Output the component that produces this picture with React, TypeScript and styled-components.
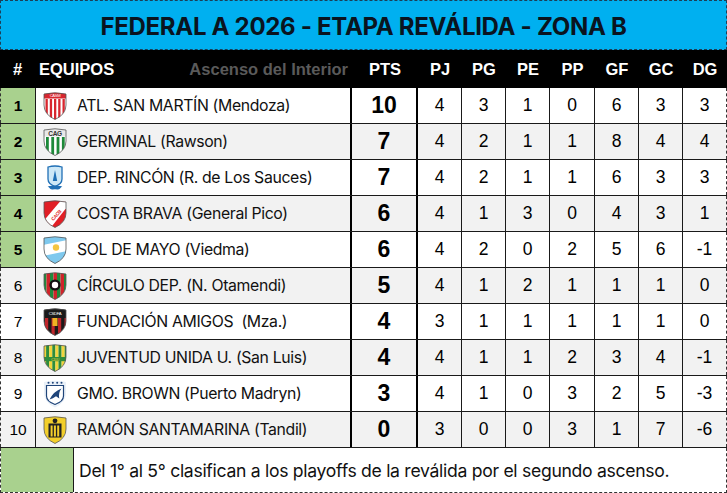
import React from 'react'
import styled, { createGlobalStyle } from 'styled-components'

const GlobalStyle = createGlobalStyle`
  html, body {
    margin: 0;
    padding: 0;
    background: #ffffff;
  }
`

const COLS = '35px 317px 66px 44px 44px 44px 45px 44px 44px 44px'
const NUM_FONT = '"Liberation Sans", Arial, sans-serif'
const TEAM_FONT = 'Inter, "Noto Sans", sans-serif'

const Sheet = styled.div`
  width: 727px;
  height: 493px;
  display: flex;
  flex-direction: column;
  overflow: hidden;
`

const Title = styled.div`
  height: 50px;
  background: #00b0f0;
  display: flex;
  align-items: center;
  justify-content: center;
  font-family: ${TEAM_FONT};
  font-weight: 700;
  font-size: 24px;
  color: #0a1420;
  letter-spacing: -0.3px;
  border: 1px dashed #1c3f57;
  box-sizing: border-box;
  padding-top: 2px;
`

const HeaderRow = styled.div`
  height: 38px;
  display: grid;
  grid-template-columns: ${COLS};
  background: #000000;
  color: #ffffff;
  font-family: ${NUM_FONT};
  font-weight: 700;
  font-size: 16.5px;
`

const HeadCell = styled.div<{ $align?: 'left' | 'center' }>`
  display: flex;
  align-items: center;
  justify-content: ${p => (p.$align === 'left' ? 'space-between' : 'center')};
  padding: ${p => (p.$align === 'left' ? '0 4px 0 4px' : '0')};
`

const Muted = styled.span`
  color: #5a5a5a;
`

const Row = styled.div<{ $shade: boolean }>`
  height: 36px;
  display: grid;
  grid-template-columns: ${COLS};
  background: ${p => (p.$shade ? '#f2f2f2' : '#ffffff')};
  border-bottom: 1px solid #1a1a1a;
  box-sizing: border-box;
`

const PosCell = styled.div<{ $qualified: boolean }>`
  display: flex;
  align-items: center;
  justify-content: center;
  background: ${p => (p.$qualified ? '#a9d18e' : 'transparent')};
  font-family: ${NUM_FONT};
  font-weight: ${p => (p.$qualified ? 700 : 400)};
  font-size: 15.5px;
  color: #000;
  border-left: 1px dashed #333;
`

const TeamCell = styled.div`
  display: flex;
  align-items: center;
  gap: 10px;
  padding-left: 7px;
  border-left: 1px solid #1a1a1a;
  border-right: 2px solid #000;
  font-family: ${TEAM_FONT};
  font-size: 15.8px;
  color: #111;
  letter-spacing: -0.35px;
  white-space: pre;
`

const NumCell = styled.div<{ $big?: boolean; $last?: boolean }>`
  display: flex;
  align-items: center;
  justify-content: center;
  font-family: ${NUM_FONT};
  font-size: ${p => (p.$big ? '23px' : '17.5px')};
  font-weight: ${p => (p.$big ? 700 : 400)};
  color: #000;
  border-right: ${p => (p.$big ? '2px solid #000' : p.$last ? '1px dashed #333' : '1px solid #1a1a1a')};
`

const Footer = styled.div`
  flex: 1;
  display: flex;
  border: 1px dashed #333;
  border-top: none;
  box-sizing: border-box;
`

const FooterSwatch = styled.div`
  width: 72px;
  background: #a9d18e;
  border-right: 1px solid #1a1a1a;
`

const FooterText = styled.div`
  display: flex;
  align-items: center;
  padding-left: 5px;
  font-family: ${TEAM_FONT};
  font-size: 17.6px;
  color: #111;
  letter-spacing: -0.3px;
  white-space: nowrap;
`

const SHIELD = 'M1 2 Q12 -0.5 23 2 L23 13 Q23 22.5 12 27.5 Q1 22.5 1 13 Z'

function Crest({ id }: { id: number }) {
  const clip = `crest-${id}`
  let body: React.ReactNode = null
  switch (id) {
    case 1:
      body = (
        <>
          <rect x="0" y="0" width="24" height="28" fill="#fff" />
          {[3.5, 7.8, 12, 16.2, 20.5].map(x => (
            <rect key={x} x={x - 1} y="7" width="2.3" height="22" fill="#d8262e" />
          ))}
          <rect x="0" y="0" width="24" height="6.5" fill="#d8262e" />
          <text x="12" y="5.3" fontSize="4.2" fill="#fff" textAnchor="middle" fontFamily="Liberation Sans">CASM</text>
        </>
      )
      break
    case 2:
      body = (
        <>
          <rect x="0" y="0" width="24" height="28" fill="#fff" />
          {[3, 8.3, 13.6, 18.9].map(x => (
            <rect key={x} x={x} y="9" width="2.8" height="20" fill="#1d8a3a" />
          ))}
          <rect x="0" y="0" width="24" height="8.5" fill="#e8e8e8" />
          <text x="12" y="7.5" fontSize="6.5" fontWeight="700" fill="#333" textAnchor="middle" fontFamily="Liberation Sans">CAG</text>
        </>
      )
      break
    case 3:
      body = (
        <>
          <rect x="0" y="0" width="24" height="28" fill="#ffffff" />
          <path d="M5 3 Q12 1 19 3 L19 15 Q19 20 12 22.5 Q5 20 5 15 Z" fill="#cde8f7" stroke="#1f6fb5" strokeWidth="1.3" />
          <path d="M12 6 L14.2 17 L9.8 17 Z" fill="#1f6fb5" />
          <path d="M1 23.5 Q12 19.5 23 23.5 L22 27 Q12 23.5 2 27 Z" fill="#1f6fb5" />
        </>
      )
      break
    case 4:
      body = (
        <>
          <rect x="0" y="0" width="24" height="28" fill="#e11f26" />
          <path d="M-2 24 L20 -2 L28 2 L6 30 Z" fill="#fff" />
          <text x="13" y="17" fontSize="4.8" fontWeight="700" fill="#e11f26" textAnchor="middle" fontFamily="Liberation Sans" transform="rotate(-48 13 15)">CACB</text>
        </>
      )
      break
    case 5:
      body = (
        <>
          <rect x="0" y="0" width="24" height="28" fill="#7fc9ee" />
          <path d="M0 9 L24 4 L24 15 L0 20 Z" fill="#fff" />
          <circle cx="13" cy="11.5" r="3.2" fill="#f4c542" />
        </>
      )
      break
    case 6:
      body = (
        <>
          {[0, 1, 2, 3, 4, 5, 6].map(i => (
            <rect key={i} x={i * 3.5} y="0" width="3.5" height="28" fill={i % 2 === 0 ? '#1f8a3c' : '#d0232a'} />
          ))}
          <circle cx="12" cy="13" r="5.6" fill="#111" />
          <circle cx="12" cy="13" r="3.2" fill="#fff" />
        </>
      )
      break
    case 7:
      body = (
        <>
          <rect x="0" y="0" width="24" height="28" fill="#1a1a1a" />
          {[2, 8.5, 15, 21.5].map(x => (
            <rect key={x} x={x} y="10" width="3.2" height="20" fill="#c0262b" />
          ))}
          <rect x="0" y="0" width="24" height="8.5" fill="#1a1a1a" />
          <text x="12" y="6.5" fontSize="4.3" fill="#fff" textAnchor="middle" fontFamily="Liberation Sans">CSDFA</text>
          <rect x="9.5" y="10" width="5" height="8" fill="#f0b323" />
        </>
      )
      break
    case 8:
      body = (
        <>
          {[0, 1, 2, 3, 4, 5, 6, 7].map(i => (
            <rect key={i} x={i * 3.1} y="0" width="3.1" height="28" fill={i % 2 === 0 ? '#f2d53c' : '#2f8d3a'} />
          ))}
          <rect x="0" y="13" width="24" height="4.2" fill="#2f8d3a" />
          <text x="12" y="16.5" fontSize="3.4" fill="#f2d53c" textAnchor="middle" fontFamily="Liberation Sans">CJUU</text>
        </>
      )
      break
    case 9:
      body = (
        <>
          <rect x="0" y="0" width="24" height="28" fill="#e9f0f8" />
          <path d="M3.5 5.5 L20.5 5.5 L20.5 16 Q20.5 21.5 12 24.5 Q3.5 21.5 3.5 16 Z" fill="#fff" stroke="#20457a" strokeWidth="1.2" />
          <path d="M6.5 19.5 Q11 11 18.5 8.5 Q15 13 16.3 18.5 L13 16.3 Q10 18.5 6.5 19.5 Z" fill="#20457a" />
          {[5.5, 9.8, 14.2, 18.5].map(x => (
            <circle key={x} cx={x} cy="2.7" r="1" fill="#20457a" />
          ))}
        </>
      )
      break
    case 10:
      body = (
        <>
          <rect x="0" y="0" width="24" height="28" fill="#f3cf2b" />
          <rect x="5.5" y="7.5" width="13" height="14" fill="#222" />
          {[7.6, 10.9, 14.2].map(x => (
            <rect key={x} x={x} y="9.5" width="2" height="11" fill="#f3cf2b" />
          ))}
          <circle cx="12" cy="4.8" r="2.4" fill="#222" />
        </>
      )
      break
  }
  const outline = id === 3 || id === 9 ? 'none' : '#555'
  return (
    <svg width="24" height="28" viewBox="0 0 24 28">
      <defs>
        <clipPath id={clip}>
          <path d={SHIELD} />
        </clipPath>
      </defs>
      <g clipPath={`url(#${clip})`}>{body}</g>
      <path d={SHIELD} fill="none" stroke={outline} strokeWidth="0.8" />
    </svg>
  )
}

type Team = {
  name: string
  pts: number
  stats: number[]
}

const teams: Team[] = [
  { name: 'ATL. SAN MARTÍN (Mendoza)', pts: 10, stats: [4, 3, 1, 0, 6, 3, 3] },
  { name: 'GERMINAL (Rawson)', pts: 7, stats: [4, 2, 1, 1, 8, 4, 4] },
  { name: 'DEP. RINCÓN (R. de Los Sauces)', pts: 7, stats: [4, 2, 1, 1, 6, 3, 3] },
  { name: 'COSTA BRAVA (General Pico)', pts: 6, stats: [4, 1, 3, 0, 4, 3, 1] },
  { name: 'SOL DE MAYO (Viedma)', pts: 6, stats: [4, 2, 0, 2, 5, 6, -1] },
  { name: 'CÍRCULO DEP. (N. Otamendi)', pts: 5, stats: [4, 1, 2, 1, 1, 1, 0] },
  { name: 'FUNDACIÓN AMIGOS  (Mza.)', pts: 4, stats: [3, 1, 1, 1, 1, 1, 0] },
  { name: 'JUVENTUD UNIDA U. (San Luis)', pts: 4, stats: [4, 1, 1, 2, 3, 4, -1] },
  { name: 'GMO. BROWN (Puerto Madryn)', pts: 3, stats: [4, 1, 0, 3, 2, 5, -3] },
  { name: 'RAMÓN SANTAMARINA (Tandil)', pts: 0, stats: [3, 0, 0, 3, 1, 7, -6] },
]

const statHeads = ['PJ', 'PG', 'PE', 'PP', 'GF', 'GC', 'DG']

export default function App() {
  return (
    <Sheet>
      <GlobalStyle />
      <Title>FEDERAL A 2026 - ETAPA REVÁLIDA - ZONA B</Title>
      <HeaderRow>
        <HeadCell>#</HeadCell>
        <HeadCell $align="left">
          <span>EQUIPOS</span>
          <Muted>Ascenso del Interior</Muted>
        </HeadCell>
        <HeadCell>PTS</HeadCell>
        {statHeads.map(h => (
          <HeadCell key={h}>{h}</HeadCell>
        ))}
      </HeaderRow>
      {teams.map((t, i) => (
        <Row key={t.name} $shade={i % 2 === 1}>
          <PosCell $qualified={i < 5}>{i + 1}</PosCell>
          <TeamCell>
            <Crest id={i + 1} />
            <span>{t.name}</span>
          </TeamCell>
          <NumCell $big>{t.pts}</NumCell>
          {t.stats.map((s, j) => (
            <NumCell key={j} $last={j === t.stats.length - 1}>
              {s}
            </NumCell>
          ))}
        </Row>
      ))}
      <Footer>
        <FooterSwatch />
        <FooterText>Del 1° al 5° clasifican a los playoffs de la reválida por el segundo ascenso.</FooterText>
      </Footer>
    </Sheet>
  )
}
